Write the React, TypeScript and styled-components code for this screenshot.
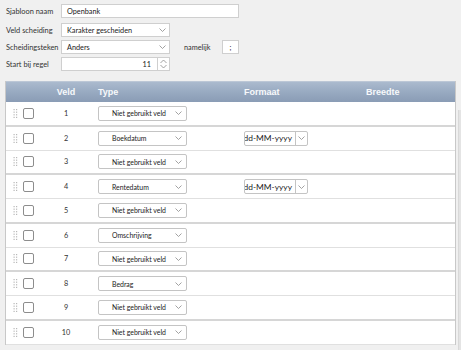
import React from "react";
import styled, { createGlobalStyle } from "styled-components";

const GlobalStyle = createGlobalStyle`
  html, body { margin: 0; padding: 0; background: #f0f0f0; overflow: hidden; }
  body { font-family: Lato, "Open Sans", sans-serif; font-size: 7.3px; color: #222; }
`;

const Page = styled.div`
  width: 461px;
  height: 350px;
  overflow: hidden;
  display: flex;
  flex-direction: column;
`;

const Form = styled.div`
  display: flex;
  flex-direction: column;
  gap: 3px;
  padding: 4px 0 0 6px;
`;

const FormRow = styled.div<{ $first?: boolean }>`
  display: flex;
  align-items: center;
  height: 14px;
  margin-bottom: ${(p) => (p.$first ? "2px" : "0")};
`;

const Label = styled.div`
  width: 55px;
  color: #333;
  font-size: 7.4px;
  white-space: nowrap;
`;

const Field = styled.div<{ $w: number }>`
  width: ${(p) => p.$w}px;
  height: 100%;
  box-sizing: border-box;
  background: #fff;
  border: 1px solid #cfcfcf;
  display: flex;
  align-items: center;
  padding-left: 5px;
  font-size: 7.3px;
  color: #222;
`;

const SelectField = styled(Field)`
  justify-content: space-between;
  padding-right: 3px;
`;

const SideLabel = styled.div`
  margin-left: 14px;
  width: 38px;
  color: #333;
  font-size: 7.3px;
`;

const SmallBox = styled(Field)`
  justify-content: center;
  padding-left: 0;
`;

const NumberWrap = styled.div`
  display: flex;
  height: 100%;
  width: 109px;
`;

const NumberInput = styled(Field)`
  justify-content: flex-end;
  padding-right: 6px;
  border-right: none;
`;

const Spinner = styled.div`
  width: 13px;
  height: 100%;
  box-sizing: border-box;
  background: #fff;
  border: 1px solid #cfcfcf;
  display: flex;
  align-items: center;
  justify-content: center;
`;

const TableArea = styled.div`
  display: flex;
  align-items: flex-start;
  margin: 10px 0 0 5px;
  gap: 2px;
`;

const ScrollTrack = styled.div`
  width: 3px;
  height: 240px;
  margin-top: 29px;
  background: #e4e4e4;
  border-left: 1px solid #d8d8d8;
`;

const Table = styled.div`
  width: 451px;
  flex: none;
  border-left: 1px solid #c8c8c8;
  border-right: 1px solid #c8c8c8;
  box-sizing: border-box;
  background: #fff;
`;

const cols = "13px 19px 56px 146px 122px 1fr";

const Header = styled.div`
  display: grid;
  grid-template-columns: ${cols};
  height: 20px;
  align-items: center;
  background: linear-gradient(to bottom, #abbace 0%, #98aac1 50%, #8a9cb5 100%);
  border-top: 1px solid #bcc7d6;
  font-family: "Liberation Sans", Arial, sans-serif;
  font-weight: bold;
  font-size: 9px;
  color: #f7f9fb;
`;

const HeadCell = styled.div<{ $center?: boolean }>`
  text-align: ${(p) => (p.$center ? "center" : "left")};
  padding-left: ${(p) => (p.$center ? "0" : "4px")};
`;

const Row = styled.div<{ $thick: boolean }>`
  display: grid;
  grid-template-columns: ${cols};
  height: ${(p) => (p.$thick ? "22.5px" : "23px")};
  align-items: center;
  background: #fff;
  border-bottom: ${(p) => (p.$thick ? "2px solid #d6d6d6" : "1px solid #e0e0e0")};
`;

const HandleCell = styled.div`
  display: flex;
  justify-content: flex-end;
`;

const CheckCell = styled.div`
  display: flex;
  justify-content: center;
`;

const CheckBox = styled.div`
  width: 11px;
  height: 11px;
  box-sizing: border-box;
  border: 1px solid #8d8d8d;
  border-radius: 2px;
  background: #fff;
`;

const NumCell = styled.div`
  text-align: center;
  font-size: 7.3px;
  color: #333;
`;

const SelCell = styled.div`
  padding-left: 4px;
  display: flex;
`;

const TypeSelect = styled.div`
  width: 89px;
  height: 15px;
  box-sizing: border-box;
  border: 1px solid #c4c4c4;
  border-radius: 2px;
  background: #fff;
  display: flex;
  align-items: center;
  justify-content: space-between;
  padding: 0 4px 0 13px;
  font-size: 6.9px;
  color: #222;
  white-space: nowrap;
`;

const FormatSelect = styled.div`
  width: 64px;
  height: 15px;
  box-sizing: border-box;
  border: 1px solid #c4c4c4;
  border-radius: 2px;
  background: #fff;
  display: flex;
  align-items: stretch;
`;

const FormatText = styled.div`
  flex: 1;
  overflow: hidden;
  display: flex;
  align-items: center;
  justify-content: flex-end;
  padding-right: 3px;
  font-size: 8.4px;
  color: #222;
  white-space: nowrap;
`;

const FormatArrow = styled.div`
  width: 11px;
  border-left: 1px solid #c4c4c4;
  display: flex;
  align-items: center;
  justify-content: center;
`;

const Chevron = () => (
  <svg width="7" height="4" viewBox="0 0 7 4">
    <polyline points="0.5,0.5 3.5,3.5 6.5,0.5" fill="none" stroke="#8a8a8a" strokeWidth="0.8" />
  </svg>
);

const SpinIcon = () => (
  <svg width="7" height="10" viewBox="0 0 7 10">
    <polyline points="0.5,4 3.5,1 6.5,4" fill="none" stroke="#8a8a8a" strokeWidth="0.8" />
    <polyline points="0.5,6 3.5,9 6.5,6" fill="none" stroke="#8a8a8a" strokeWidth="0.8" />
  </svg>
);

const Dots = () => (
  <svg width="6" height="11" viewBox="0 0 6 11">
    {[0, 1, 2, 3].map((r) =>
      [0, 1].map((c) => (
        <rect key={`${r}-${c}`} x={0.5 + c * 2.5} y={1 + r * 2.6} width="1.2" height="1.2" fill="#b8b8b8" />
      ))
    )}
  </svg>
);

const rows: { type: string; format?: string }[] = [
  { type: "Niet gebruikt veld" },
  { type: "Boekdatum", format: "dd-MM-yyyy" },
  { type: "Niet gebruikt veld" },
  { type: "Rentedatum", format: "dd-MM-yyyy" },
  { type: "Niet gebruikt veld" },
  { type: "Omschrijving" },
  { type: "Niet gebruikt veld" },
  { type: "Bedrag" },
  { type: "Niet gebruikt veld" },
  { type: "Niet gebruikt veld" },
];

export default function App() {
  return (
    <Page>
      <GlobalStyle />
      <Form>
        <FormRow $first>
          <Label>Sjabloon naam</Label>
          <Field $w={178}>Openbank</Field>
        </FormRow>
        <FormRow>
          <Label>Veld scheiding</Label>
          <SelectField $w={109}>
            <span>Karakter gescheiden</span>
            <Chevron />
          </SelectField>
        </FormRow>
        <FormRow>
          <Label>Scheidingsteken</Label>
          <SelectField $w={109}>
            <span>Anders</span>
            <Chevron />
          </SelectField>
          <SideLabel>namelijk</SideLabel>
          <SmallBox $w={17}>;</SmallBox>
        </FormRow>
        <FormRow>
          <Label>Start bij regel</Label>
          <NumberWrap>
            <NumberInput $w={96}>11</NumberInput>
            <Spinner>
              <SpinIcon />
            </Spinner>
          </NumberWrap>
        </FormRow>
      </Form>
      <TableArea>
        <Table>
          <Header>
            <div />
            <div />
            <HeadCell $center>Veld</HeadCell>
            <HeadCell>Type</HeadCell>
            <HeadCell>Formaat</HeadCell>
            <HeadCell>Breedte</HeadCell>
          </Header>
          {rows.map((r, i) => (
            <Row key={i} $thick={i % 2 === 0}>
              <HandleCell>
                <Dots />
              </HandleCell>
              <CheckCell>
                <CheckBox />
              </CheckCell>
              <NumCell>{i + 1}</NumCell>
              <SelCell>
                <TypeSelect>
                  <span>{r.type}</span>
                  <Chevron />
                </TypeSelect>
              </SelCell>
              <SelCell>
                {r.format && (
                  <FormatSelect>
                    <FormatText>{r.format}</FormatText>
                    <FormatArrow>
                      <Chevron />
                    </FormatArrow>
                  </FormatSelect>
                )}
              </SelCell>
              <div />
            </Row>
          ))}
        </Table>
        <ScrollTrack />
      </TableArea>
    </Page>
  );
}
